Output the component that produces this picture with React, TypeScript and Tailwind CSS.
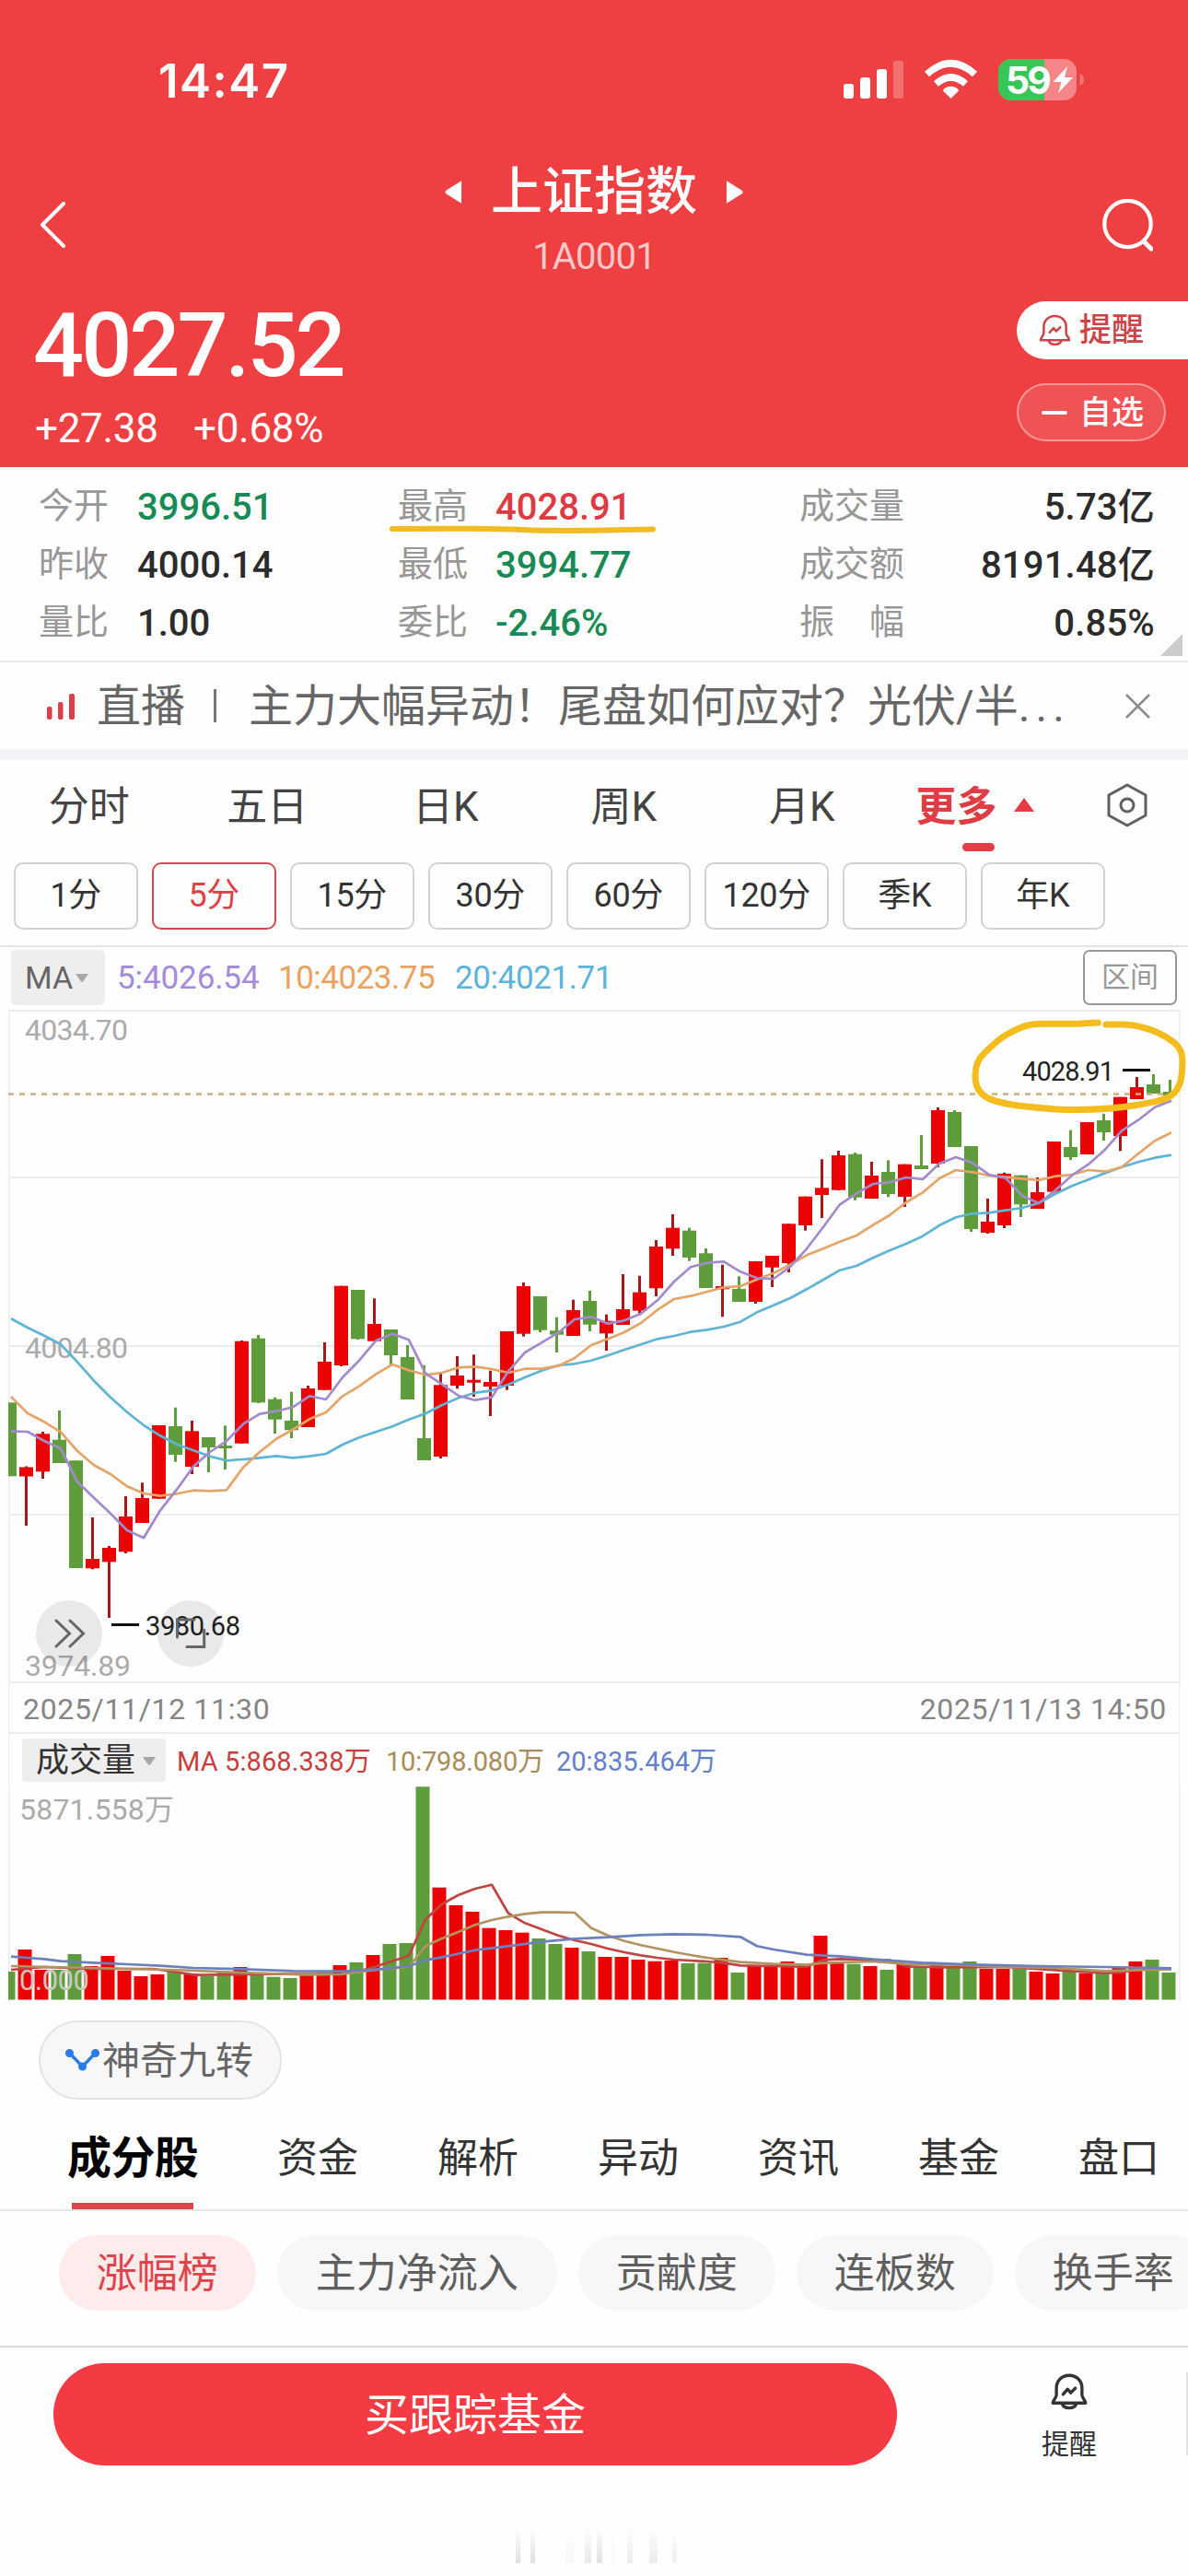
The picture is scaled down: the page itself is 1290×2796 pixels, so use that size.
import React from "react";

type Candle = {
  up: boolean;
  top: number;
  bottom: number;
  high: number;
  low: number;
  volTop: number;
};

const c = (dir: string, top: number, bottom: number, high: number, low: number, volTop: number): Candle => ({
  up: dir === "r",
  top,
  bottom,
  high,
  low,
  volTop,
});

const candles: Candle[] = [
  c("g", 1522.3, 1602.3, 1522.3, 1602.3, 2140),
  c("r", 1592.5, 1602.5, 1591.5, 1656, 2116),
  c("r", 1556.3, 1597.3, 1554, 1605, 2138),
  c("g", 1562.7, 1588, 1531, 1588, 2138),
  c("g", 1585.3, 1702, 1585.3, 1702, 2121),
  c("r", 1692, 1702.3, 1647, 1703.3, 2134),
  c("r", 1680, 1695.3, 1678, 1756, 2123),
  c("r", 1646, 1684.3, 1624, 1686, 2139),
  c("r", 1626, 1653, 1609.3, 1653, 2145),
  c("r", 1547, 1626.7, 1547, 1626.7, 2143),
  c("g", 1548, 1579, 1527.7, 1586.7, 2140),
  c("r", 1553.3, 1592, 1542, 1600, 2142),
  c("g", 1560, 1571, 1560, 1598, 2145),
  c("g", 1569, 1572, 1547.3, 1595, 2140.7),
  c("r", 1455.7, 1566.7, 1455, 1566.7, 2135),
  c("g", 1452.7, 1522.3, 1449, 1523, 2143),
  c("g", 1518.7, 1540.7, 1516.7, 1556, 2145.7),
  c("g", 1542, 1552.3, 1510.7, 1561, 2147),
  c("r", 1507, 1549, 1504, 1549, 2144),
  c("r", 1478, 1508.7, 1457, 1508.7, 2141.7),
  c("r", 1395.7, 1482, 1395.7, 1483, 2133),
  c("g", 1400, 1453.3, 1400, 1454, 2130),
  c("r", 1437, 1455.7, 1409.3, 1455.7, 2122),
  c("g", 1443, 1471, 1443, 1481, 2110),
  c("g", 1473, 1519, 1460, 1519, 2109),
  c("g", 1561, 1585, 1482, 1585, 1939.3),
  c("r", 1503.3, 1581, 1491, 1583, 2048.7),
  c("r", 1493, 1504, 1472, 1507.3, 2068),
  c("r", 1497.7, 1500.7, 1470.3, 1516, 2075),
  c("r", 1500, 1505, 1487.7, 1537, 2092.7),
  c("r", 1445, 1504, 1445, 1508.7, 2095),
  c("r", 1396, 1447.7, 1392, 1450.7, 2097.7),
  c("g", 1407, 1443.7, 1407, 1446, 2104),
  c("g", 1444.3, 1448.7, 1429.7, 1468, 2110),
  c("r", 1422, 1450, 1410.7, 1450, 2114),
  c("g", 1412, 1437.7, 1401, 1445, 2118),
  c("r", 1433.7, 1447.3, 1426.7, 1466, 2124),
  c("r", 1421, 1438, 1383, 1438, 2124),
  c("r", 1402.7, 1422.7, 1384.7, 1427.3, 2127),
  c("r", 1353, 1398.3, 1346, 1407, 2128.7),
  c("r", 1332.7, 1355.3, 1318, 1363, 2128),
  c("g", 1335.7, 1365, 1332.7, 1368.7, 2131),
  c("g", 1360.3, 1398, 1355, 1398, 2130.7),
  c("r", 1396, 1399.3, 1372.7, 1429.3, 2125),
  c("g", 1399, 1413, 1385.3, 1413, 2141),
  c("r", 1369, 1413, 1369, 1415, 2134),
  c("r", 1363, 1375.7, 1363, 1397, 2132.7),
  c("r", 1328.3, 1371, 1328.3, 1381, 2129),
  c("r", 1298.7, 1330, 1298.7, 1335.7, 2131.7),
  c("r", 1289.3, 1297, 1258.3, 1322, 2101),
  c("r", 1254, 1291.7, 1249, 1291.7, 2131),
  c("g", 1252.7, 1299.7, 1251, 1302.7, 2131.7),
  c("r", 1276, 1301, 1261, 1301, 2134),
  c("g", 1272, 1296, 1259.3, 1299.3, 2138),
  c("r", 1263.7, 1299, 1263.7, 1310, 2132),
  c("g", 1265, 1269, 1232, 1269, 2134),
  c("r", 1205, 1263, 1202, 1267, 2130),
  c("g", 1207, 1245, 1205, 1245, 2134),
  c("g", 1244, 1334, 1244, 1337, 2129),
  c("r", 1326, 1338, 1301, 1339, 2137),
  c("r", 1274, 1330, 1272.7, 1333, 2137),
  c("g", 1275.7, 1307.3, 1275.7, 1321, 2136),
  c("r", 1294, 1312, 1278, 1312, 2140),
  c("r", 1239, 1293.7, 1239, 1294.7, 2142),
  c("g", 1245, 1256, 1226.7, 1259, 2139),
  c("r", 1218, 1253, 1218, 1253, 2141.7),
  c("g", 1216, 1229, 1209, 1238, 2140.7),
  c("r", 1190.7, 1233, 1190.7, 1249.3, 2135),
  c("r", 1180, 1193, 1169, 1193, 2129),
  c("g", 1177, 1187, 1166, 1187, 2127),
  c("g", 1185, 1189, 1172, 1189, 2141),
];

const ma5 = [
  1553.7, 1554, 1564, 1572.3, 1608.3, 1625.7, 1642.7, 1661, 1669.3, 1639.3, 1616.7, 1591.7, 1576, 1564, 1545.7, 1534.7,
  1531.7, 1527.3, 1515.3, 1519, 1495, 1476.7, 1455.3, 1447.7, 1454.3, 1490.7, 1502.7, 1515, 1519.7, 1516.7, 1488.3, 1468,
  1457.3, 1446.7, 1432, 1429.3, 1436.7, 1433.3, 1425.7, 1411.3, 1391, 1375.3, 1370.7, 1369.3, 1380.3, 1387.3, 1388, 1375,
  1355.3, 1331.7, 1307.3, 1295.3, 1285, 1283.3, 1278, 1280, 1263, 1256, 1262.3, 1275, 1278.7, 1298, 1306, 1292, 1275.7,
  1263.7, 1247.7, 1227.3, 1215.7, 1201.7, 1194.7,
];
const ma10 = [
  1516, 1534, 1543.3, 1554.3, 1575, 1590.3, 1600, 1613.3, 1621, 1623.7, 1621.3, 1617.7, 1618.3, 1617.3, 1592.7, 1576,
  1561.7, 1551.7, 1540.3, 1533, 1515.3, 1504.7, 1491.7, 1481, 1487.3, 1492.3, 1490, 1484.3, 1483.3, 1486, 1490, 1485.7,
  1485.7, 1482.7, 1474, 1460, 1453.3, 1446, 1436, 1421.7, 1410, 1406.7, 1402, 1397.3, 1396, 1388.7, 1381.7, 1372.7, 1362.3,
  1355.3, 1347.7, 1341, 1329.7, 1319, 1305, 1294.3, 1279, 1270, 1272.3, 1276, 1277.7, 1279.3, 1281, 1276.7, 1275, 1270,
  1271.7, 1266.7, 1252.3, 1238.3, 1229.3,
];
const ma20 = [
  1431.3, 1441, 1449.7, 1459.3, 1478.3, 1498.7, 1516.7, 1532.7, 1547, 1558.3, 1567.7, 1574.3, 1580.7, 1585.3, 1584, 1582.3,
  1580.3, 1582.3, 1580.7, 1578, 1568, 1560.3, 1554.3, 1548.3, 1540.7, 1534.3, 1525, 1517.3, 1511.7, 1509.3, 1502.7, 1495,
  1487.7, 1482, 1480.3, 1476.7, 1471.3, 1465, 1459.3, 1453.3, 1450, 1445.7, 1443.3, 1440, 1434.7, 1424.3, 1416.7, 1409,
  1399.3, 1389, 1378.7, 1374, 1365.3, 1357.3, 1350, 1341.7, 1330, 1321.3, 1317.3, 1316.3, 1313.7, 1311, 1305.7, 1295.7,
  1287.3, 1280.3, 1273.3, 1266.7, 1261.3, 1256.7, 1253.7,
];

const volMa5 =
  "12,2138 48,2135 100,2137 166,2137 195,2141 212,2143.7 240,2143.3 300,2142.7 370,2142.7 400,2137 444,2122.7 462,2083.3 480,2066.7 498,2056.7 516,2050 534,2045.7 552,2076.7 570,2087.3 588,2094 606,2100.7 624,2106 642,2110 660,2115 678,2119 696,2122.3 714,2125 732,2127 768,2129 786,2130.7 804,2133.3 840,2134 876,2134.7 894,2127.3 912,2126.3 966,2127.7 984,2134.3 1020,2135.3 1092,2135 1146,2138.3 1200,2141.7 1218,2140.7 1236,2137.7 1272,2136.7";
const volMa10 =
  "12,2134 100,2136 200,2138.5 260,2141 330,2143.3 370,2143 400,2139 430,2136 444,2135 462,2112.3 480,2104 498,2096.7 516,2089.3 534,2084 552,2080.3 570,2077.3 588,2075.7 606,2075.7 624,2076 642,2092.7 660,2100.7 678,2106.7 696,2111.3 714,2115 732,2118.7 750,2122 768,2125 786,2127.3 804,2129.7 840,2131.7 876,2132.7 894,2130.7 948,2129 984,2131.7 1038,2132.7 1092,2135 1146,2136 1200,2139.3 1272,2137.3";
const volMa20 =
  "12,2123.7 30,2125 48,2126.3 66,2128.7 102,2130.3 138,2132 174,2133.7 210,2136 264,2137.3 318,2139.3 372,2139.7 408,2137.7 426,2136 444,2134 462,2127.7 480,2124.3 516,2116.7 552,2112.3 588,2107.7 624,2104.3 660,2102.7 696,2100.3 732,2099.3 768,2100 804,2102.3 822,2112.3 840,2116 876,2121.7 912,2123.3 948,2126.7 1002,2130.3 1056,2132.3 1128,2134 1200,2135 1272,2136.3";

const PITCH = 18;
const RED = "#eb0203";
const GREEN = "#5f9d3c";
const series = (ys: number[]) => ys.map((y, i) => `${12 + PITCH * i},${y}`).join(" ");

const barX = (i: number, start: number) => {
  const left = Math.max(9, start + PITCH * i);
  return { x: left, width: start + 15 + PITCH * i - left };
};

function Bell({ className, stroke }: { className: string; stroke: number }) {
  return (
    <svg className={className} viewBox="0 0 36 36" fill="none" stroke="currentColor" strokeWidth={stroke} strokeLinejoin="round" strokeLinecap="round">
      <path d="M18 2 C10.500 2 5.500 7.500 5.500 14.500 V21 C5.500 24.500 2 26 2 29 H34 C34 26 30.500 24.500 30.500 21 V14.500 C30.500 7.500 25.500 2 18 2 Z" />
      <path d="M11 29.500 C12.500 35.300 23.500 35.300 25 29.500" />
      <path d="M12 20.500 L16.500 15.500 L19.500 19 L24 14.500" />
    </svg>
  );
}

function StatusBar() {
  return (
    <div className="flex h-[150px] items-start justify-between pt-[62px] pr-[112px] pl-[172px]">
      <div className="font-[Inter] text-[51px] leading-[52px] font-semibold tracking-[1.5px]">14:47</div>
      <svg className="mt-[2px] h-[46px] w-[262px] overflow-visible" viewBox="916 64 262 46">
        <g fill="#fff">
          <rect x="916" y="91" width="11" height="16" rx="3" />
          <rect x="934" y="84" width="11" height="23" rx="3" />
          <rect x="952" y="75" width="11" height="32" rx="3" />
          <rect x="970" y="66" width="11" height="41" rx="3" opacity=".25" />
          <path d="M1032.500 107 L1024 98.500 Q1024 96.500 1027 95 Q1032.500 92.300 1038 95 Q1041 96.500 1041 98.500 Z" />
        </g>
        <g fill="none" stroke="#fff" strokeWidth="7.500">
          <path d="M1006.500 80.500 Q1032.500 57 1058.500 80.500" />
          <path d="M1016.500 91 Q1032.500 77 1048.500 91" />
        </g>
        <rect x="1084" y="64" width="85" height="45" rx="14" fill="#f68587" />
        <path d="M1134 64 H1098 A14 14 0 0 0 1084 78 V95 A14 14 0 0 0 1098 109 H1134 Z" fill="#38c657" />
        <path d="M1172.500 80 Q1177 82 1177 86.500 Q1177 91 1172.500 93 Z" fill="#f27678" />
        <text x="1092" y="101.500" fontFamily="Inter" fontWeight="700" fontSize="41" fill="#fff" textLength="50">
          59
        </text>
        <path d="M1159 72 L1143.500 89 H1152.500 L1149 101 L1165 84 H1156 Z" fill="#fff" />
      </svg>
    </div>
  );
}

function Header() {
  return (
    <header className="h-[507px] overflow-hidden bg-[#ee4042] text-white">
      <StatusBar />
      <div className="flex h-[177px] justify-between pr-[38px] pl-[43px]">
        <svg className="mt-[68px] h-[52px] w-[60px]" viewBox="0 0 60 52" fill="none" stroke="#fff" strokeWidth="4" strokeLinecap="round" strokeLinejoin="round">
          <path d="M26 3 L3 26 L26 49" />
        </svg>
        <div className="flex flex-col items-center pt-[30px] pr-[5px]">
          <div className="flex items-center">
            <svg className="h-[27px] w-[19px]" viewBox="0 0 20 28" fill="#fff">
              <path d="M19 1 V27 L1 15.500 Q0 14 1 12.500 Z" />
            </svg>
            <h1 className="mx-[31px] text-[56px] leading-[56px] font-medium">上证指数</h1>
            <svg className="h-[27px] w-[19px]" viewBox="0 0 20 28" fill="#fff">
              <path d="M1 1 V27 L19 15.500 Q20 14 19 12.500 Z" />
            </svg>
          </div>
          <div className="mt-[23px] text-[40px] leading-[40px] tracking-[-0.8px] text-[#f9c8c9]">1A0001</div>
        </div>
        <svg className="mt-[66px] h-[58px] w-[60px]" viewBox="0 0 60 58" fill="none" stroke="#fff" strokeLinecap="round">
          <circle cx="32.500" cy="27" r="25.200" strokeWidth="4.200" />
          <path d="M50 46 L58 54" strokeWidth="5" />
        </svg>
      </div>
      <div className="flex justify-between">
        <div className="pl-[38px]">
          <div className="mt-[1px] -ml-[2px] text-[97px] leading-[94px] font-medium tracking-[-3px]">4027.52</div>
          <div className="mt-[21px] flex text-[44px] leading-[44px]">
            <span className="w-[172px] tracking-[-0.3px]">+27.38</span>
            <span className="tracking-[-0.3px]">+0.68%</span>
          </div>
        </div>
        <div className="flex flex-col items-end">
          <div className="flex h-[63px] w-[186px] items-center rounded-l-full bg-white pl-[24px] text-[35px] leading-none font-medium text-[#cd4448]">
            <Bell className="mr-[9px] h-[35px] w-[35px]" stroke={2.6} />
            提醒
          </div>
          <div className="mt-[26px] mr-[24px] flex h-[63px] w-[162px] items-center rounded-full border-2 border-white/40 bg-white/10 pl-[25px] text-[35px] leading-none font-medium">
            <span className="mr-[13px] h-[4px] w-[28px] rounded bg-white" />
            <span className="mt-[2px]">自选</span>
          </div>
        </div>
      </div>
    </header>
  );
}

const quoteRows = [
  ["今开", "3996.51", "text-[#178a55]", "最高", "4028.91", "text-[#dd3a44]", "成交量", "5.73亿"],
  ["昨收", "4000.14", "text-[#2b2b2b]", "最低", "3994.77", "text-[#178a55]", "成交额", "8191.48亿"],
  ["量比", "1.00", "text-[#2b2b2b]", "委比", "-2.46%", "text-[#178a55]", "振　幅", "0.85%"],
];

function Quotes() {
  return (
    <section className="relative h-[212px] border-b-2 border-[#e9e9e9] pt-[10px]">
      {quoteRows.map((r) => (
        <div key={r[0]} className="flex h-[63px] items-center text-[40px] leading-none font-medium whitespace-nowrap">
          <span className="w-[108px] pl-[42px] text-[38px] font-normal text-[#979797]">{r[0]}</span>
          <span className={"mt-[4px] w-[282px] pl-[41px] tracking-[0px] " + r[2]}>{r[1]}</span>
          <span className="w-[108px] pl-[42px] text-[38px] font-normal text-[#979797]">{r[3]}</span>
          <span className={"mt-[4px] w-[330px] pl-[40px] tracking-[0px] " + r[5]}>{r[4]}</span>
          <span className="w-[160px] pl-[40px] text-[38px] font-normal text-[#979797]">{r[6]}</span>
          <span className="mt-[4px] flex-1 pr-[36px] text-right tracking-[0.2px] text-[#2b2b2b]">{r[7]}</span>
        </div>
      ))}
      <svg className="absolute top-[62px] left-[420px] h-[12px] w-[296px]" viewBox="0 0 296 12" fill="none" stroke="#f0bb23" strokeWidth="6" strokeLinecap="round">
        <path d="M6 5 Q110 4 148 6 T289 5.500" />
      </svg>
      <svg className="absolute right-[6px] bottom-[5px] h-[24px] w-[24px]" viewBox="0 0 24 24" fill="#cccccc">
        <path d="M24 0 V24 H0 Z" />
      </svg>
    </section>
  );
}

function LiveBanner() {
  return (
    <section className="flex h-[106px] items-center border-b-[12px] border-[#f3f3f8] pl-[51px] text-[48px] leading-none text-[#666]">
      <svg className="mt-[2px] mr-[23px] h-[30px] w-[31px]" viewBox="0 0 31 30" fill="#dd3f46">
        <rect x="0" y="15" width="5.500" height="14" rx="2" />
        <rect x="12" y="10" width="5.500" height="19" rx="2" />
        <rect x="24" y="1" width="6" height="28" rx="2" />
      </svg>
      <span className="mt-[2px]">直播</span>
      <span className="mr-[35px] ml-[31px] h-[36px] w-[3px] bg-[#777]" />
      <span className="mt-[2px] flex-1 whitespace-nowrap">
        主力大幅异动！尾盘如何应对？光伏/半<span className="tracking-[6px]">...</span>
      </span>
      <svg className="mr-[41px] h-[27px] w-[27px]" viewBox="0 0 27 27" stroke="#8a8a8a" strokeWidth="2.500">
        <path d="M1 1 L26 26 M26 1 L1 26" />
      </svg>
    </section>
  );
}

function PeriodTabs() {
  return (
    <nav className="relative flex h-[101px] items-center text-[44px] leading-none text-[#444]">
      {["分时", "五日", "日K", "周K", "月K"].map((t) => (
        <span key={t} className="w-[193.500px] text-center">
          {t}
        </span>
      ))}
      <span className="flex w-[193px] items-center pl-[27px] font-bold text-[#de3d45]">
        更多
        <svg className="-mt-[4px] ml-[18px] h-[15px] w-[22px]" viewBox="0 0 22 15" fill="#e63c46">
          <path d="M11 0 L22 15 H0 Z" />
        </svg>
      </span>
      <svg className="-mt-[3px] ml-[41px] h-[48px] w-[44px]" viewBox="0 0 44 48" fill="none" stroke="#606060" strokeWidth="3" strokeLinejoin="round">
        <path d="M22 2 L42 13 V35 L22 46 L2 35 V13 Z" />
        <circle cx="22" cy="24" r="7" />
      </svg>
      <span className="absolute top-[90px] left-[1045px] h-[9px] w-[35px] rounded-full bg-[#e33e46]" />
    </nav>
  );
}

function IntervalButtons() {
  return (
    <div className="flex h-[102px] gap-[15.500px] border-b-2 border-[#e4e4e4] pt-[10px] pl-[15px]">
      {["1分", "5分", "15分", "30分", "60分", "120分", "季K", "年K"].map((t) => (
        <button
          key={t}
          className={
            t === "5分"
              ? "h-[73px] w-[134.500px] rounded-[10px] border-2 border-[#d9474c] pb-[2px] text-[36px] leading-none tracking-[-0.3px] text-[#dd4147]"
              : "h-[73px] w-[134.500px] rounded-[10px] border-2 border-[#d2d2d2] pb-[2px] text-[36px] leading-none tracking-[-0.3px] text-[#333]"
          }
        >
          {t}
        </button>
      ))}
    </div>
  );
}

function MaRow() {
  return (
    <div className="flex h-[68px] items-start pt-[3px] pr-[12px] pl-[12px] text-[35px] leading-[62px]">
      <span className="flex h-[60px] w-[102px] items-center rounded-[5px] bg-[#eeeeee] pl-[15px] text-[34px] text-[#666]">
        MA
        <svg className="ml-[3px] h-[9px] w-[14px]" viewBox="0 0 14 9" fill="#a8a8a8">
          <path d="M0 0 H14 L8 8.500 Q7 9 6 8.500 Z" />
        </svg>
      </span>
      <span className="ml-[13px] w-[175px] tracking-[-0.1px] text-[#a48bdc]">5:4026.54</span>
      <span className="w-[192px] tracking-[-0.5px] text-[#eba160]">10:4023.75</span>
      <span className="flex-1 tracking-[-0.4px] text-[#5cb3dc]">20:4021.71</span>
      <span className="flex h-[60px] w-[102px] items-center justify-center rounded-[7px] border-2 border-[#999] text-[31px] text-[#999]">
        区间
      </span>
    </div>
  );
}

function PriceChart() {
  return (
    <svg className="block h-[731px] w-[1290px]" viewBox="0 1096 1290 731" fontFamily="Roboto">
      <g stroke="#ececec" strokeWidth="2" fill="none">
        <path d="M10 1097 H1280 M10 1278 H1280 M10 1461 H1280 M10 1644 H1280 M10 1826 H1280" />
        <path d="M10 1096 V1827 M1281 1096 V1827" strokeWidth="1.500" />
      </g>
      <g fill="#ababab" fontSize="32">
        <text x="27" y="1129" textLength="112">4034.70</text>
        <text x="27" y="1474" textLength="112">4004.80</text>
        <text x="27" y="1819" textLength="115">3974.89</text>
      </g>
      {candles.map((k, i) => (
        <g key={i} fill={k.up ? RED : GREEN}>
          {i > 0 && (
            <rect x={9 + PITCH * i} y={k.high} width="3" height={k.low - k.high} fill={k.up ? "#a81818" : GREEN} />
          )}
          <rect {...barX(i, 3)} y={k.top} height={k.bottom - k.top} />
        </g>
      ))}
      <path d="M9 1187.500 H1278" stroke="#c9b083" strokeWidth="2.500" strokeDasharray="6 6" />
      <g fill="none" strokeWidth="2.700" strokeLinejoin="round">
        <polyline points={series(ma20)} stroke="#5fb4d4" />
        <polyline points={series(ma10)} stroke="#e5a468" />
        <polyline points={series(ma5)} stroke="#a38bcb" />
      </g>
      <g fill="#222" fontSize="29">
        <text x="1110" y="1173" textLength="100">4028.91</text>
        <text x="158" y="1775" textLength="103">3980.68</text>
      </g>
      <path d="M1219 1161.500 H1249 M121 1763.500 H151" stroke="#111" strokeWidth="3" />
      <g fill="#000" opacity=".08">
        <circle cx="75" cy="1773" r="36" />
        <circle cx="207" cy="1773" r="36" />
      </g>
      <g fill="none" stroke="#666" strokeWidth="3" strokeLinecap="round">
        <path d="M61 1759 L75.500 1773 L61 1787 M76 1759 L90.500 1773 L76 1787" />
        <path d="M192.500 1777 V1758 H211 M221.700 1769 V1787.500 H203" />
      </g>
      <path
        d="M1192.300 1110 C1184 1110 1176 1111 1166.700 1111.300 H1130 C1113 1111.500 1104 1117 1093 1123 C1084 1128 1076 1136 1069 1143 C1060 1151 1059 1160 1059 1167 C1059 1178 1062 1186 1073 1192 C1088 1199 1110 1201 1146.700 1204 C1180 1205.500 1208 1204 1237 1199 C1252 1196 1264 1195 1272 1189 C1283 1180 1283.500 1168 1284 1154 C1284 1143 1282 1138 1275 1131.500 C1262 1122 1243 1113 1220 1112 H1201"
        fill="none"
        stroke="#f4bc1d"
        strokeWidth="7"
        strokeLinecap="round"
      />
    </svg>
  );
}

function VolumeChart() {
  return (
    <svg className="block h-[234px] w-[1290px]" viewBox="0 1939 1290 234" fontFamily="Roboto, 'Noto Sans CJK SC'">
      <path d="M10 1939 V2172 M1281 1939 V2172" stroke="#ececec" strokeWidth="1.500" />
      {candles.map((k, i) => (
        <rect key={i} {...barX(i, 1.5)} y={k.volTop} height={2170.5 - k.volTop} fill={k.up ? RED : GREEN} />
      ))}
      <g fill="#ababab" fontSize="32">
        <text x="21" y="1975" textLength="168">5871.558万</text>
        <text x="21" y="2160" textLength="76" fontSize="31" fill="#c8c8c0">0.000</text>
      </g>
      <g fill="none" strokeWidth="2.700" strokeLinejoin="round">
        <polyline points={volMa5} stroke="#c04442" />
        <polyline points={volMa10} stroke="#b1935f" />
        <polyline points={volMa20} stroke="#6c80bd" />
      </g>
    </svg>
  );
}

function ChartSection() {
  return (
    <section>
      <MaRow />
      <PriceChart />
      <div className="mx-[9px] flex h-[55px] items-center justify-between border-x-[1.500px] border-b-2 border-[#ececec] pt-[2px] pr-[13px] pl-[15px] text-[32px] leading-none text-[#858585]">
        <span className="tracking-[0.65px]">2025/11/12 11:30</span>
        <span className="tracking-[0.65px]">2025/11/13 14:50</span>
      </div>
      <div className="mx-[9px] flex h-[57px] items-center border-x-[1.500px] border-[#ececec] pl-[14px] text-[29px] leading-none whitespace-nowrap">
        <span className="flex h-[47px] w-[156px] items-center rounded-[4px] bg-[#eeeeee] pl-[15px] text-[36px] text-[#333]">
          <span>成交量</span>
          <svg className="mt-[2px] ml-[8px] h-[9px] w-[14px]" viewBox="0 0 14 9" fill="#a8a8a8">
            <path d="M0 0 H14 L8 8.500 Q7 9 6 8.500 Z" />
          </svg>
        </span>
        <span className="mt-[4px] ml-[12px] w-[227px] tracking-[0.1px] text-[#c83e3f]">MA 5:868.338万</span>
        <span className="mt-[4px] w-[185px] tracking-[-0.2px] text-[#a98c58]">10:798.080万</span>
        <span className="mt-[4px] text-[#6480ca]">20:835.464万</span>
      </div>
      <VolumeChart />
    </section>
  );
}

function Bottom() {
  return (
    <>
      <div className="flex h-[132px] pt-[20px] pl-[42px]">
        <div className="flex h-[86px] w-[264px] items-center rounded-full border-2 border-[#e4e4e4] bg-[#f7f7f7] pl-[27px] text-[41px] leading-none text-[#666]">
          <svg className="mr-[3px] h-[24px] w-[37px]" viewBox="0 0 37 24" fill="#2b7de6" stroke="#2b7de6" strokeWidth="3.500">
            <path d="M5 5 L18.500 19 L32 5" fill="none" />
            <circle cx="4.500" cy="4.500" r="2.800" />
            <circle cx="32.500" cy="4.500" r="2.800" />
            <circle cx="18.500" cy="19" r="2.800" />
          </svg>
          <span className="mt-[2px]">神奇九转</span>
        </div>
      </div>
      <nav className="relative flex h-[95px] items-start overflow-hidden border-b-2 border-[#e8e8e8] pt-[14px] text-[44px] leading-[48px] whitespace-nowrap text-[#333]">
        <span className="w-[301px] shrink-0 pl-[73px] text-[48px] font-bold tracking-[-0.6px] text-black">成分股</span>
        {["资金", "解析", "异动", "资讯", "基金", "盘口"].map((t) => (
          <span key={t} className="w-[174px] shrink-0">
            {t}
          </span>
        ))}
        <span className="absolute bottom-0 left-[78px] h-[7px] w-[132px] bg-[#dc454a]" />
      </nav>
      <div className="flex h-[148px] gap-[23.500px] overflow-hidden border-b-2 border-[#d9d9d9] pt-[26px] pl-[64px] text-[44px] leading-none whitespace-nowrap text-[#5f5f5f]">
        <span className="flex h-[82px] w-[213.500px] shrink-0 items-center justify-center rounded-full bg-[#feecec] pt-[2px] text-[#e0444a]">涨幅榜</span>
        <span className="flex h-[82px] w-[303.500px] shrink-0 items-center justify-center rounded-full bg-[#f7f7f7] pt-[2px]">主力净流入</span>
        <span className="flex h-[82px] w-[213.500px] shrink-0 items-center justify-center rounded-full bg-[#f7f7f7] pt-[2px]">贡献度</span>
        <span className="flex h-[82px] w-[213.500px] shrink-0 items-center justify-center rounded-full bg-[#f7f7f7] pt-[2px]">连板数</span>
        <span className="flex h-[82px] w-[213.500px] shrink-0 items-center justify-center rounded-full bg-[#f7f7f7] pt-[2px]">换手率</span>
      </div>
      <footer className="flex h-[248px] pt-[17px] pl-[58px]">
        <div>
          <button className="flex h-[111px] w-[916px] items-center justify-center rounded-full bg-[#f43a43] pt-[3px] text-[48px] leading-none text-white">
            买跟踪基金
          </button>
          <svg className="mt-[66px] ml-[500px] h-[42px] w-[180px]" viewBox="558 2742 180 42">
            <defs>
              <linearGradient id="fade" x1="0" y1="0" x2="0" y2="1">
                <stop offset="0" stopColor="#bbb" stopOpacity="0" />
                <stop offset="1" stopColor="#bbb" stopOpacity=".55" />
              </linearGradient>
            </defs>
            <g fill="url(#fade)">
              <rect x="560" y="2744" width="5" height="38" opacity=".8" />
              <rect x="576" y="2742" width="5" height="40" opacity=".8" />
              <rect x="614" y="2744" width="9" height="38" opacity=".2" />
              <rect x="635" y="2744" width="7" height="38" opacity=".6" />
              <rect x="648" y="2744" width="6" height="38" opacity=".8" />
              <rect x="664" y="2744" width="4" height="38" opacity=".15" />
              <rect x="681" y="2744" width="6" height="38" opacity=".5" />
              <rect x="705" y="2744" width="9" height="38" opacity=".5" />
              <rect x="730" y="2744" width="5" height="38" opacity=".4" />
            </g>
          </svg>
        </div>
        <div className="flex w-[314px] flex-col items-center pt-[11px] pl-[60px] text-[30px] leading-none text-[#333]">
          <Bell className="mb-[22px] h-[40px] w-[40px]" stroke={3} />
          提醒
        </div>
        <span className="mt-[10px] h-[90px] w-[2px] bg-[#e2e2e2]" />
      </footer>
    </>
  );
}

export default function App() {
  return (
    <main className="h-[2796px] w-[1290px] overflow-hidden bg-[#fefefe] font-[Roboto,'Noto_Sans_CJK_SC',sans-serif]">
      <Header />
      <Quotes />
      <LiveBanner />
      <PeriodTabs />
      <IntervalButtons />
      <ChartSection />
      <Bottom />
    </main>
  );
}
